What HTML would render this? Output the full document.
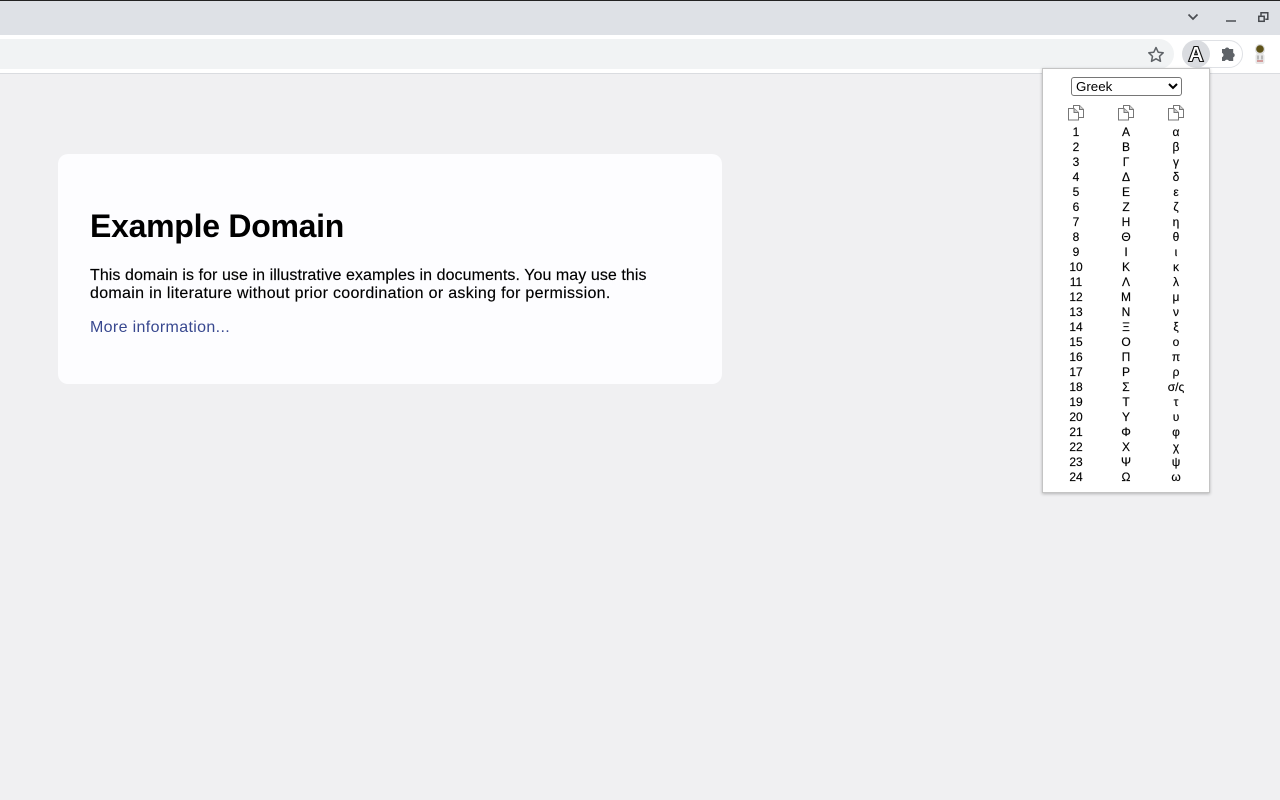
<!DOCTYPE html>
<html><head><meta charset="utf-8"><title>Example Domain</title>
<style>
html,body{margin:0;padding:0;width:1280px;height:800px;overflow:hidden;background:#f0f0f2;font-family:"Liberation Sans",sans-serif}
.abs{position:absolute}
#tabs{left:0;top:1px;width:1280px;height:34px;background:#dee1e6}
#topline{left:0;top:0;width:1280px;height:1px;background:#222}
#bar{left:0;top:35px;width:1280px;height:38px;background:#fff}
#line{left:0;top:73px;width:1280px;height:1px;background:#dadce0}
#omni{left:-20px;top:39px;width:1194px;height:30px;background:#f1f3f4;border-radius:15px}
#card{left:58px;top:154px;width:664px;height:230px;background:#fdfdff;border-radius:10px}
h1{position:absolute;left:90px;top:207px;margin:0;font-size:32px;line-height:38px;font-weight:bold;color:#000;white-space:nowrap;letter-spacing:-.27px}
.t{position:absolute;left:90px;font-size:16px;line-height:18px;color:#000;white-space:nowrap;-webkit-text-stroke:.15px #000}
#pop{left:1043px;top:69px;width:166px;height:423px;background:#fff;box-shadow:0 0 0 1px #c4c4c4,0 1px 3px 1px rgba(0,0,0,.25)}
select{position:absolute;left:1071px;top:77px;width:111px;height:19px;font:13.33px "Liberation Sans",sans-serif;background:#fff;color:#000;border:1px solid #767676;border-radius:3px;padding:0;margin:0}
.c{position:absolute;width:50px;text-align:center;font-size:12px;line-height:15px;color:#000;top:125px;white-space:pre-line;-webkit-text-stroke:.15px #000}
</style></head><body>
<div class="abs" id="tabs"></div><div class="abs" id="topline"></div>
<div class="abs" id="bar"></div><div class="abs" id="line"></div><div class="abs" id="omni"></div>
<svg class="abs" style="left:1130px;top:0" width="150" height="74" viewBox="0 0 150 74" fill="none">
<path d="M58.500 14.500l4.500 4.500 4.500-4.500" stroke="#4a4d52" stroke-width="1.700"/>
<path d="M96 21h10" stroke="#4a4d52" stroke-width="1.500"/>
<rect x="128.800" y="16.300" width="5.400" height="5" stroke="#45484d" stroke-width="1.500"/>
<path d="M131 15.500v-2.800h6.800v6.500h-2.500" stroke="#45484d" stroke-width="1.500"/>
<path d="M26 47.500l2.200 4.700 5 .6-3.700 3.500 1 5-4.500-2.500-4.500 2.500 1-5-3.700-3.500 5-.6z" stroke="#5f6368" stroke-width="1.500" stroke-linejoin="round"/>
<path d="M66 40.500h33a13.500 13.500 0 0 1 0 27H66" stroke="#dfe1e5" stroke-width="1"/>
<circle cx="66" cy="54" r="14" fill="#dadce0"/>
<path fill-rule="evenodd" d="M58.500 61.500L64 46.500H68L73.500 61.500H69.800L68.300 57.500H63.700L62.200 61.500ZM64.600 54.700H67.400L66 50.500Z" fill="#fff" stroke="#111" stroke-width="1.100"/>
<path d="M92.500 49.500h3a2.200 2.200 0 0 1 4.200 0h4v4a2.300 2.300 0 0 1 0 4.300v3.700h-4.200a2.300 2.300 0 0 0-4.200 0h-2.800v-3.800a2.300 2.300 0 0 0 0-4.300z" fill="#5f6368" transform="translate(-.500 -.500)"/>
<ellipse cx="130" cy="49.500" rx="5" ry="5.500" fill="#ddd"/>
<ellipse cx="130" cy="49" rx="3.800" ry="3.800" fill="#5e5218"/>
<rect x="125.500" y="54" width="9" height="10" rx="2" fill="#e6e6e6"/>
<path d="M127 61h6" stroke="#c0504d" stroke-width="1"/>
<path d="M128 55.500v4M132 55.500v4" stroke="#888" stroke-width="1"/>
</svg>
<div class="abs" id="card"></div>
<h1>Example Domain</h1>
<div class="t" style="top:267px;letter-spacing:.066px">This domain is for use in illustrative examples in documents. You may use this</div>
<div class="t" style="top:285px;letter-spacing:.31px">domain in literature without prior coordination or asking for permission.</div>
<div class="t" style="top:319px;color:#38488f;letter-spacing:.35px;-webkit-text-stroke:0">More information...</div>
<div class="abs" id="pop"></div>
<select><option>Greek</option></select>
<svg class="abs" style="left:1060px;top:104px" width="130" height="18" viewBox="0 0 130 18" fill="#fff" stroke="#777" stroke-width="1">
<g id="i"><path d="M13.500 4V1.500h6l4 4v8h-5"/><path d="M19.500 1.500v4h4" fill="#ccc"/><path d="M8.500 4.500h5.500l4.500 4v7.500h-10z"/><path d="M14 4.500v4h4.500" fill="#ccc"/></g>
<use href="#i" x="50"/><use href="#i" x="100"/>
</svg>
<div class="c" style="left:1051px">1
2
3
4
5
6
7
8
9
10
11
12
13
14
15
16
17
18
19
20
21
22
23
24</div>
<div class="c" style="left:1101px">Α
Β
Γ
Δ
Ε
Ζ
Η
Θ
Ι
Κ
Λ
Μ
Ν
Ξ
Ο
Π
Ρ
Σ
Τ
Υ
Φ
Χ
Ψ
Ω</div>
<div class="c" style="left:1151px">α
β
γ
δ
ε
ζ
η
θ
ι
κ
λ
μ
ν
ξ
ο
π
ρ
σ/ς
τ
υ
φ
χ
ψ
ω</div>
</body></html>
